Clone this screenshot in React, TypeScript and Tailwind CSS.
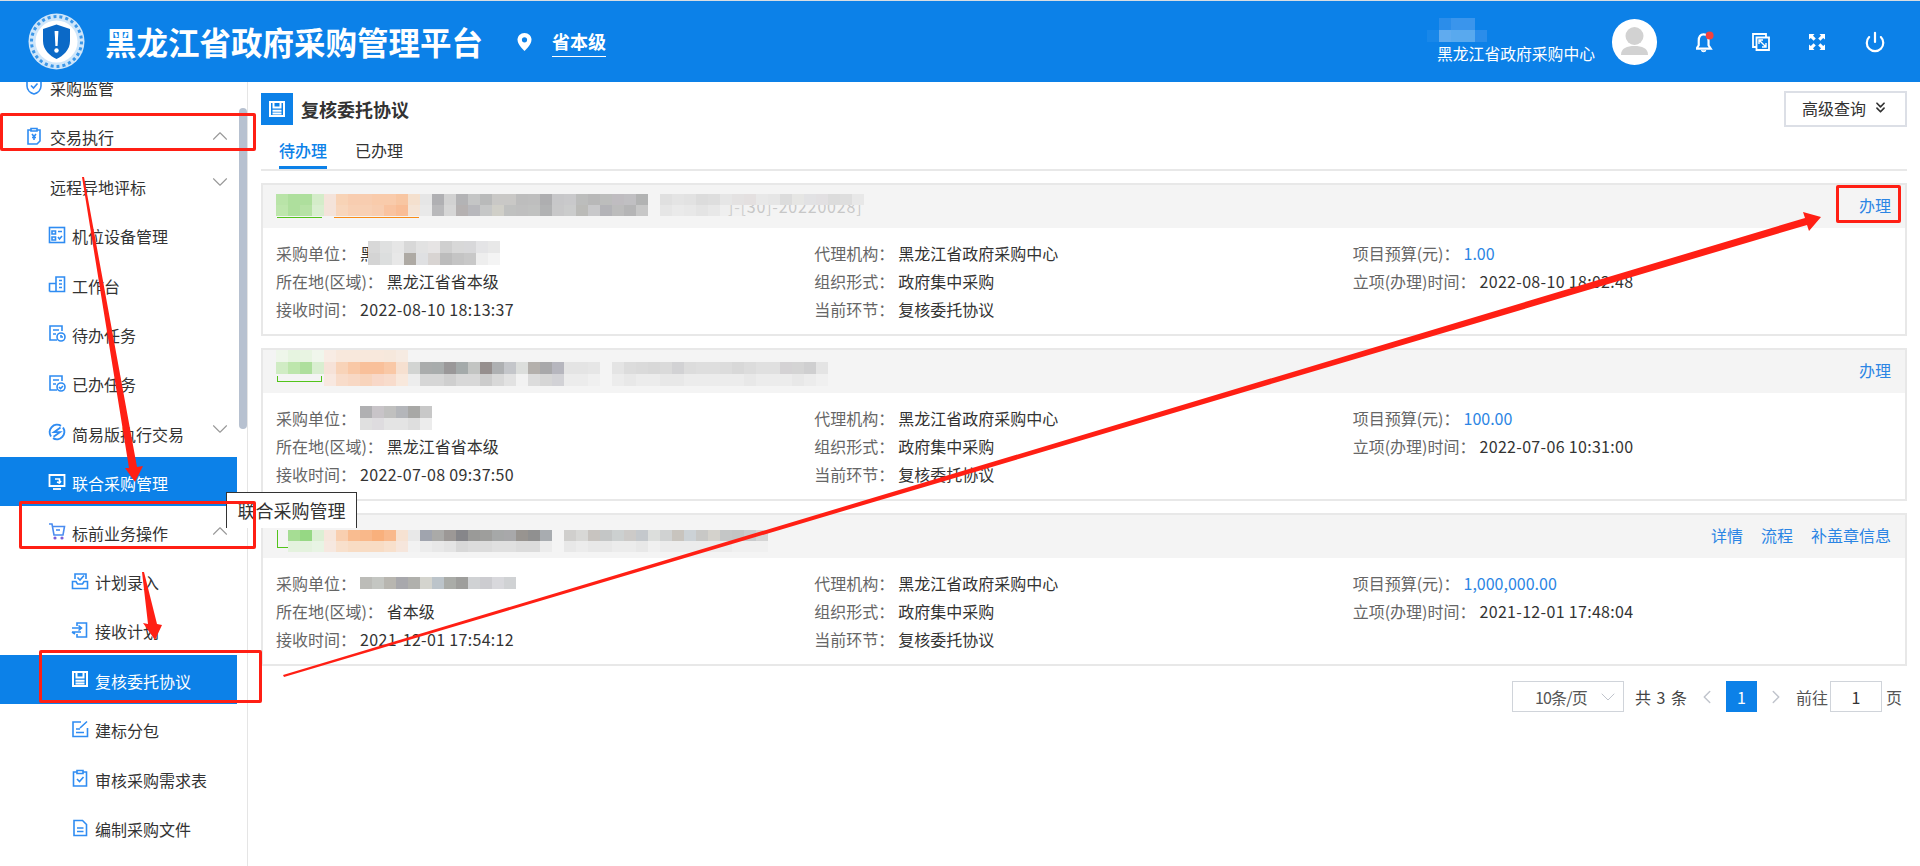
import { ReactNode } from "react"
import { ChevronDown, ChevronLeft, ChevronRight, ChevronUp, ChevronsDown, Power } from "lucide-react"

// --- mosaic blocks standing in for the blurred-out parts of the screenshot ---
function Mosaic({ rows, tall = false, className = "" }: { rows: string[]; tall?: boolean; className?: string }) {
  return (
    <div className={"relative flex flex-col " + className}>
      {rows.map((row, i) => (
        <div key={i} className="flex">
          {row.split(" ").map((c, j) => (
            <div key={j} className={tall ? "w-3 h-3" : "w-3 h-[11px]"} style={{ backgroundColor: c === "0" ? "transparent" : "#" + c }} />
          ))}
        </div>
      ))}
    </div>
  )
}

function Ico({ children, className = "" }: { children: ReactNode; className?: string }) {
  return (
    <svg viewBox="0 0 18 18" fill="none" stroke="currentColor" strokeWidth="1.6" className={"w-[18px] h-[18px] shrink-0 " + className}>
      {children}
    </svg>
  )
}

const ShieldIcon = () => (
  <Ico>
    <path d="M9 1 L16 3.5 V9 C16 13 12.5 16 9 17 C5.5 16 2 13 2 9 V3.5 Z" />
    <path d="M6 8.5 L8.5 11 L12.5 6.5" />
  </Ico>
)
const YenClipIcon = () => (
  <Ico>
    <path d="M6 3 H3 V17 H12 L15 14 V3 H12" />
    <path d="M6 1.5 H12 V4 H6 Z" />
    <path d="M7 7 L9 9.5 L11 7 M9 9.5 V13 M7 10.5 H11" />
  </Ico>
)
const DeviceIcon = () => (
  <Ico>
    <rect x="1.5" y="1.5" width="15" height="15" />
    <path d="M4 5 H7.5 V8 H4 Z M10 5.5 H14 M4 11 H7.5 V14 H4 Z M10 11 L11.5 13 L14 10" />
  </Ico>
)
const DeskIcon = () => (
  <Ico>
    <path d="M1.5 16.5 V8.5 H8 M8 16.5 V2 H16.5 V16.5 H1.5" />
    <path d="M11 5.5 H14 M11 9 H14 M11 12.5 H14" />
  </Ico>
)
const TaskClockIcon = () => (
  <Ico>
    <path d="M9 16 H2 V2 H14 V7" />
    <path d="M5 6 H11 M5 10 H8" />
    <circle cx="13" cy="13" r="4" />
    <path d="M13 11 V13 H15" />
  </Ico>
)
const TaskDoneIcon = () => (
  <Ico>
    <path d="M9 16 H2 V2 H14 V7" />
    <path d="M5 6 H11 M5 10 H8" />
    <circle cx="13" cy="13" r="4" />
    <path d="M11 13 L12.5 14.5 L15 12" />
  </Ico>
)
const NoSignIcon = () => (
  <Ico>
    <path d="M13 2.8 A7.5 7.5 0 0 0 3 13.5" strokeWidth="2" />
    <path d="M5 15.2 A7.5 7.5 0 0 0 15 4.5" strokeWidth="2" />
    <path d="M12.5 4.5 L6 9.2 H12 L5.5 13.8" strokeWidth="1.8" />
  </Ico>
)
const ScreenIcon = () => (
  <Ico>
    <path d="M1.5 2 H16.5 V13 H1.5 Z" strokeWidth="1.8" />
    <path d="M5 16 H13" strokeWidth="1.8" />
    <path d="M7 6 H11.5 V9.5 M9 9 L11.5 10 L13 8" />
  </Ico>
)
const CartIcon = () => (
  <Ico>
    <path d="M1 2 H4 L6 13 H15 L16.5 4.5 H4.5" stroke="#4a8cf0" />
    <path d="M8 8 H12" stroke="#4a8cf0" />
    <circle cx="7" cy="16" r="0.8" fill="#7a5fd8" stroke="#7a5fd8" />
    <circle cx="14" cy="16" r="0.8" fill="#7a5fd8" stroke="#7a5fd8" />
  </Ico>
)
const InboxCheckIcon = () => (
  <Ico>
    <path d="M4 7 V2 H15 V7" />
    <path d="M1.5 9.5 H5 L6.5 12 H11.5 L13 9.5 H16.5 V16.5 H1.5 Z" />
    <path d="M6.5 5.5 L9 8 L13 3.5" />
  </Ico>
)
const ReceiveIcon = () => (
  <Ico>
    <path d="M6 5 V2 H15.5 V16 H6 V13" />
    <path d="M1 7 H10 M7.5 4.5 L10.5 7 L7.5 9.5 M1 11 H10 M4 13 L1 11" />
  </Ico>
)
const FloppyIcon = () => (
  <Ico>
    <path d="M2 2 H16 V16 H2 Z" strokeWidth="2" />
    <path d="M5.5 2 V7.5 H12.5 V2 M4.5 10.8 H13.5 M4.5 13.6 H13.5" strokeWidth="2" />
  </Ico>
)
const EditIcon = () => (
  <Ico>
    <path d="M10 2 H2 V16.5 H16.5 V8" />
    <path d="M5 12.5 H13 M5 9 H9 M9 8 L16 1.5" />
  </Ico>
)
const ClipCheckIcon = () => (
  <Ico>
    <path d="M6 3 H2.5 V17 H15.5 V3 H12" />
    <path d="M6 1.5 H12 V4.5 H6 Z" />
    <path d="M6 10 L8.5 12.5 L12.5 8" />
  </Ico>
)
const FileIcon = () => (
  <Ico>
    <path d="M3 1.5 H11.5 L15.5 5.5 V16.5 H3 Z" />
    <path d="M6 9 H12.5 M6 12.5 H12.5" />
  </Ico>
)

type Item = { label: string; icon?: ReactNode; level: 1 | 2 | 3; chevron?: "up" | "down"; active?: boolean }

const menu: Item[] = [
  { label: "采购监管", icon: <ShieldIcon />, level: 1 },
  { label: "交易执行", icon: <YenClipIcon />, level: 1, chevron: "up" },
  { label: "远程异地评标", level: 1, chevron: "down" },
  { label: "机位设备管理", icon: <DeviceIcon />, level: 2 },
  { label: "工作台", icon: <DeskIcon />, level: 2 },
  { label: "待办任务", icon: <TaskClockIcon />, level: 2 },
  { label: "已办任务", icon: <TaskDoneIcon />, level: 2 },
  { label: "简易版执行交易", icon: <NoSignIcon />, level: 2, chevron: "down" },
  { label: "联合采购管理", icon: <ScreenIcon />, level: 2, active: true },
  { label: "标前业务操作", icon: <CartIcon />, level: 2, chevron: "up" },
  { label: "计划录入", icon: <InboxCheckIcon />, level: 3 },
  { label: "接收计划", icon: <ReceiveIcon />, level: 3 },
  { label: "复核委托协议", icon: <FloppyIcon />, level: 3, active: true },
  { label: "建标分包", icon: <EditIcon />, level: 3 },
  { label: "审核采购需求表", icon: <ClipCheckIcon />, level: 3 },
  { label: "编制采购文件", icon: <FileIcon />, level: 3 },
]

function MenuRow({ item }: { item: Item }) {
  const pad = item.level === 1 ? "pl-[25px]" : item.level === 2 ? "pl-[48px]" : "pl-[71px]"
  const gap = item.level === 1 ? "gap-[7px]" : "gap-[6px]"
  return (
    <div
      className={
        "h-[49.43px] w-[237px] flex items-center text-[16px] shrink-0 " +
        pad +
        " " +
        gap +
        (item.active ? " bg-[#0c81e8] text-white" : " text-[#333] ")
      }
    >
      {item.icon ? (
        <span className={item.active ? "text-white flex" : "text-[#2f8cf2] flex"}>{item.icon}</span>
      ) : (
        <span className="w-[18px]" />
      )}
      <span className="whitespace-nowrap pt-[3px]">{item.label}</span>
      {item.chevron === "up" && (
        <span className="ml-auto mr-[4px] text-[#999] flex">
          <ChevronUp size={26} strokeWidth={1} />
        </span>
      )}
      {item.chevron === "down" && (
        <span className="ml-auto mr-[4px] -mt-[6px] text-[#999] flex">
          <ChevronDown size={26} strokeWidth={1} />
        </span>
      )}
    </div>
  )
}

function Field({ label, value, blue, date, blur }: { label: string; value?: string; blue?: boolean; date?: boolean; blur?: ReactNode }) {
  return (
    <div className="flex h-7 items-center whitespace-nowrap text-[16px]">
      <span className="text-[#666] mr-1">{label}：</span>
      {blur ?? <span className={(blue ? "text-[#2b85e4]" : "text-[#333]") + (date ? " tracking-[0.32px]" : "")}>{value}</span>}
    </div>
  )
}

const green1 = "b9e4a8 aedf9d aedf9d d4ecc9"
const green2 = "bde6ac aedf9d b6e2a5 d9eed0"

const cards = [
  {
    pad: "pt-[9px]",
    actions: ["办理"],
    marks: (
      <>
        <span className="absolute left-[14px] top-[32px] w-[45px] h-px bg-[#52c41a]" />
        <span className="absolute left-[71px] top-[32px] w-[85px] h-px bg-[#fa8c16]" />
        <span className="absolute left-[465px] top-[9px] leading-6 text-[16px] text-[#666] tracking-[0.8px] whitespace-nowrap">]-[30]-20220028]</span>
      </>
    ),
    first: [
      green1 + " f4e3da f8d3b6 f8cdb0 f8cdb0 f9cbab f9cbab f8c6a2 f4e0ce e6e6e6 b0b0b3 d2d2d2 b3b3b5 c4c5c5 b9baba c9c8c6 c9c8c6 bdbdbd bebebe aeaeb0 c7c7c9 c9c9cb bcbdbc b8b8b8 bcbdbc bfbcc0 c0bfc2 b2b3b3",
      green2 + " f4e3da f8d6bc f8d0b4 f8d0b4 f8cdb0 f9c3a0 f9bd96 f4e4d6 e9e9e9 b9b9bb d6d6d6 b5b1b1 b8b8bc c6c7c7 d0cfc8 c0c1c0 bfbfbf c0c1c0 b1b2b3 c8c8c9 cbcccc bbbbb8 c8c8ca b3b3b7 bcbcbc b5b5b6 c7c7c7",
    ],
    second: [
      "e0e0e0 e4e4e4 e2e2e2 dcdcdc dedede e6e6e6 e4e2e2 e4e0e0 e8e8e8 e6e6e6 dcdcdc e6e6e4 e2e2e4 e2e0e2 dcdcdc dedede e8e8e8",
      "e6e6e6 eaeaea e8e8e8 e4e4e4 e8e8e8 ecececc0 efefefc0 f2f2f2b0 f2f2f2b0 f4f4f4b0 f4f4f4b0 f4f4f4b0 f4f4f4b0 f4f4f4b0 f4f4f4b0 f4f4f4b0 f4f4f4b0",
    ],
    tall: false,
    unit: (
      <div className="flex items-center">
        <span className="text-[#333]">黑</span>
        <Mosaic
          tall
          className="-ml-[8px]"
          rows={[
            "d8d8d8 dfe0e0 e6e6e6 d8d8d8 e2e2e2 e6e4e4 cfcfcf d8d8d8 d8d8da e4e4e6 e8e8e8",
            "d4d4d4 dcdede e8e8e8 aeaaa4 dfe0e2 d8d4d2 bcbcbc c4c4c4 c8c8c8 eeeeee f4f4f4",
          ]}
        />
      </div>
    ),
    region: "黑龙江省省本级",
    received: "2022-08-10 18:13:37",
    budget: "1.00",
    created: "2022-08-10 18:02:48",
  },
  {
    pad: "pt-[0px]",
    actions: ["办理"],
    marks: <span className="absolute left-[14px] top-[26px] w-[45px] h-[6px] border-x border-b border-[#52c41a]" />,
    first: [
      "eef6ea e6f4e0 e8f4e2 f0f6ec f8ece4 f8e8dc f8e8dc f8e8dc f8e8dc f6e8dc f6ebe2 0 0 0 0 0 0 0 0 0 0 0 0 0 0 0 0",
      "d0ecc4 bde6ac aedf9d d9eed0 f6e2d8 f8d3b8 f9c8a6 f9c09a f9c09a f9c8a6 f6e0d0 d2d4d2 aaacac a8acac 9a9899 a4aaaa c2c4c2 968f8e aeb0b2 c4c6ca dcdedc b4b0ac a8a8aa b6b6be e4e4e4 e4e4e4 e6e6e6",
      "0 0 0 0 f8e8e0 f8dcca f8d8c4 f8d4bc f8d8c8 f8dccc f8e8dc ededed d6d6d6 d6d6d6 cfcfcf d8d8d8 d8d8d8 cccccc d8d8d8 e2e2e2 f2f2f2 dcdcdc d6d6d6 d2d2d6 ececec ececec f0f0f0",
    ],
    second: [
      "f4f4f4 f4f4f4 f4f4f4 f4f4f4 f4f4f4 f4f4f4 f4f4f4 f4f4f4 f4f4f4 f4f4f4 f4f4f4 f4f4f4 f4f4f4 f4f4f4 f4f4f4 f4f4f4 f4f4f4 f4f4f4",
      "e4e4e4 dcdcdc dadada d8d8d8 dadada d2d2d4 dcdcdc dedede dedede dcdcdc d8d8d8 dcdcdc e0e0e0 e0e0e0 d4d2d4 d4d4d4 cfcfd0 e4e4e4",
      "ececec e8e8e8 ececec ececec e8e8e8 e8e8e8 ececec ececec ececec ececec ececec e8e8e8 ececec ececec ececec e8e8e8 ececec f0f0f0",
    ],
    tall: true,
    unit: (
      <Mosaic
        tall
        rows={["b0b0b2 c8c4c8 c0c0bf b4b6ba a8a8a6 c8c8c8", "e0e0e0 dedcdf e4e4e4 e4e4e4 dedede ececec"]}
      />
    ),
    region: "黑龙江省省本级",
    received: "2022-07-08 09:37:50",
    budget: "100.00",
    created: "2022-07-06 10:31:00",
  },
  {
    pad: "pt-[15px]",
    actions: ["详情", "流程", "补盖章信息"],
    marks: <span className="absolute left-[14px] top-[15px] w-[12px] h-[18px] border-l border-b border-[#52c41a]" />,
    first: [
      "0 a6dd94 96d884 dcefd4 f6e6dc f9cfb0 f9bc90 f9b88a f9b07c f9b98c f6e2d2 e8e8e8 a0a4ae aaaaa8 9c9896 86868a 9a9a98 9e9e9c a6a8a8 a8a8aa 989490 909090 a8acb0",
      "0 e4f2de e4f2de e8f4e4 f6e8e0 f8e0cc f8dcc4 f8dcc4 f8dcc4 f8e0cc f6e6dc f2f2f2 ececec e8e8e8 e4e4e4 d8d8d8 dcdcdc dcdcdc e0e0e0 e0e0e0 dcdcdc dcdcdc ececec",
    ],
    second: [
      "d0cfcd d8d8d6 c8c4c0 c4c6c6 ccd0d0 cccac8 c4c8cc dcdedc d0d2d2 c8c4be ccd2d6 c8c8c6 d4d2cc c4c6c6 c2c4c4 c8cacc d4d4d4",
      "e8e8e8 ececec e8e8e8 e8e8e8 ececec ececec e8e8e8 f0f0f0 ececec ececec ececec ececec ececec ececec f0f0f0 f0f0f0 f0f0f0",
    ],
    tall: false,
    unit: (
      <Mosaic
        tall
        rows={["bcbcb8 c4c6c2 b8b6b0 a8a8ac b0b0ac d4d4ce bcc4ca aaaca8 9e9e9c d0d2d4 ccccd0 d8d8dc d0d2d4"]}
      />
    ),
    region: "省本级",
    received: "2021-12-01 17:54:12",
    budget: "1,000,000.00",
    created: "2021-12-01 17:48:04",
  },
]

function Card({ card }: { card: (typeof cards)[number] }) {
  return (
    <div className="h-[153px] border-2 border-[#e8e8e8] bg-white overflow-hidden">
      <div className={"relative h-[43px] bg-[#f4f4f4] pl-[13px] flex items-start " + card.pad}>
        {card.marks}
        <Mosaic rows={card.first} tall={card.tall} />
        <Mosaic rows={card.second} tall={card.tall} className="ml-3" />
        <div className="absolute right-[14px] top-0 h-full pb-[3px] flex items-center gap-[18px] text-[16px] text-[#2b85e4]">
          {card.actions.map((a) => (
            <span key={a}>{a}</span>
          ))}
        </div>
      </div>
      <div className="grid grid-cols-3 pl-[13px] pr-[14px] pt-[11px]">
        <div>
          <Field label="采购单位" blur={card.unit} />
          <Field label="所在地(区域)" value={card.region} />
          <Field label="接收时间" value={card.received} date />
        </div>
        <div>
          <Field label="代理机构" value="黑龙江省政府采购中心" />
          <Field label="组织形式" value="政府集中采购" />
          <Field label="当前环节" value="复核委托协议" />
        </div>
        <div>
          <Field label="项目预算(元)" value={card.budget} blue />
          <Field label="立项(办理)时间" value={card.created} date />
        </div>
      </div>
    </div>
  )
}

function Logo() {
  return (
    <svg viewBox="0 0 57 57" className="w-[57px] h-[57px] shrink-0">
      <circle cx="28.5" cy="28.5" r="28" fill="#cfe6fa" />
      <circle cx="28.5" cy="28.5" r="25" fill="none" stroke="#3b97e8" strokeWidth="3" strokeDasharray="3 3" />
      <circle cx="28.5" cy="28.5" r="21" fill="#fff" />
      <path d="M28.5 11.5 L42 16 V28 C42 37 35 43 28.5 46 C22 43 15 37 15 28 V16 Z" fill="#0b69c7" />
      <path d="M26.6 18 H30.4 L29.6 33 H27.4 Z" fill="#fff" />
      <circle cx="28.5" cy="37.5" r="2.2" fill="#fff" />
    </svg>
  )
}

export default function App() {
  return (
    <div className="relative w-[1920px] h-[866px] overflow-hidden bg-white font-['Noto_Sans_CJK_SC','Noto_Sans',sans-serif]">
      {/* Header */}
      <header className="relative z-10 h-[82px] bg-[#0c81e8] border-t border-[#d8dde2] flex items-center text-white">
        <div className="ml-[28px]">
          <Logo />
        </div>
        <h1 className="ml-[20px] text-[31.5px] font-bold whitespace-nowrap">黑龙江省政府采购管理平台</h1>
        <svg viewBox="0 0 15 18" className="ml-[34px] w-[15px] h-[18px]">
          <path d="M7.5 0 C3.4 0 0.5 3 0.5 6.8 C0.5 11 5 15.5 7.5 18 C10 15.5 14.5 11 14.5 6.8 C14.5 3 11.6 0 7.5 0 Z" fill="#fff" />
          <circle cx="7.5" cy="6.8" r="2.6" fill="#0c81e8" />
        </svg>
        <span className="ml-[20px] text-[18px] font-bold border-b border-white leading-[30px] whitespace-nowrap">省本级</span>

        <div className="ml-auto flex flex-col items-start">
          <Mosaic
            tall
            className="ml-[-10px] opacity-90"
            rows={["0 2f8feb 3f98ed 3f98ed 0", "1a88ea 6ab0f0 62aeef 62aeef 2f8feb"]}
          />
          <span className="text-[15.8px] whitespace-nowrap leading-[22px] mt-[1px]">黑龙江省政府采购中心</span>
        </div>
        <div className="ml-[17px] w-[45px] h-[46px] rounded-full bg-white overflow-hidden">
          <svg viewBox="0 0 45 46" className="w-full h-full">
            <circle cx="22.5" cy="17" r="9" fill="#d2d2d2" />
            <path d="M9 36 C9 29 15 27 22.5 27 C30 27 36 29 36 36 Z" fill="#d2d2d2" />
          </svg>
        </div>
        <div className="ml-[39px] mr-[34px] flex items-center gap-[38px]">
          <svg viewBox="1 0 16.5 20" className="w-[18px] h-[22px]">
            <path d="M8 3 C4.5 3 3.5 6 3.5 9 V13 L1.5 16 H14.5 L12.5 13 V9 C12.5 6 11.5 3 8 3 Z" fill="none" stroke="#fff" strokeWidth="2" />
            <path d="M6 17.5 C6.5 19.5 9.5 19.5 10 17.5" fill="#fff" stroke="#fff" />
            <circle cx="13.5" cy="4" r="3.6" fill="#f5413c" />
          </svg>
          <svg viewBox="0 0 18 18" className="w-[18px] h-[18px]" fill="none" stroke="#fff" strokeWidth="1.8">
            <path d="M14 5 V1 H1 V14 H5" />
            <path d="M4.5 4.5 H17 V17 H4.5 Z" />
            <path d="M7 7 L14 14 M7 11 V7 H11 M14 10 V14 H10" strokeWidth="1.4" />
          </svg>
          <svg viewBox="0 0 18 18" className="w-[18px] h-[18px]" fill="#fff">
            <path d="M1 1 H6.5 L5 2.8 L7.8 5.6 L5.6 7.8 L2.8 5 L1 6.5 Z" />
            <path d="M17 1 H11.5 L13 2.8 L10.2 5.6 L12.4 7.8 L15.2 5 L17 6.5 Z" />
            <path d="M1 17 H6.5 L5 15.2 L7.8 12.4 L5.6 10.2 L2.8 13 L1 11.5 Z" />
            <path d="M17 17 H11.5 L13 15.2 L10.2 12.4 L12.4 10.2 L15.2 13 L17 11.5 Z" />
          </svg>
          <Power size={22} strokeWidth={2.4} />
        </div>
      </header>

      <div className="flex h-[784px]">
        {/* Sidebar */}
        <aside className="relative w-[248px] shrink-0 border-r border-[#e5e5e5] overflow-hidden">
          <div className="-mt-[20.4px] flex flex-col">
            {menu.map((item) => (
              <MenuRow key={item.label} item={item} />
            ))}
          </div>
          <div className="absolute left-[239px] top-[26px] w-2 h-[321px] rounded bg-[#b7c1d0]" />
        </aside>

        {/* Main */}
        <main className="flex-1 min-w-0 px-[13px] pt-[9px]">
          <div className="flex items-center justify-between h-9">
            <div className="flex items-center">
              <div className="w-8 h-8 bg-[#0c81e8] text-white flex items-center justify-center">
                <FloppyIcon />
              </div>
              <h2 className="ml-[8px] text-[18px] font-bold text-[#333]">复核委托协议</h2>
            </div>
            <button className="w-[123px] h-9 border-2 border-[#dcdfe6] bg-white pb-[3px] text-[16px] text-[#333] flex items-center justify-center gap-[6px]">
              高级查询
              <ChevronsDown size={17} strokeWidth={2.4} />
            </button>
          </div>

          <div className="mt-[7px] h-[37px] border-b-2 border-[#e8e8e8] flex items-end pl-[18px] gap-[28px] text-[16px]">
            <span className="h-[36px] flex items-center border-b-[3px] border-[#0c81e8] text-[#0c81e8] font-medium">待办理</span>
            <span className="h-[36px] flex items-center border-b-[3px] border-transparent text-[#333]">已办理</span>
          </div>

          <div className="mt-3 flex flex-col gap-3">
            {cards.map((c, i) => (
              <Card key={i} card={c} />
            ))}
          </div>

          {/* Pagination */}
          <div className="mt-[15px] pr-[5px] flex items-center justify-end text-[16px] text-[#555]">
            <div className="relative w-[112px] h-[31px] border border-[#d0d4da] flex items-center pl-[22px] tracking-[-0.8px] text-[#555]">
              10条/页
              <ChevronDown size={24} strokeWidth={1} className="absolute right-[3px] top-[3px] text-[#c0c4cc]" />
            </div>
            <span className="ml-[11px] whitespace-nowrap text-[#444] [word-spacing:2px]">共 3 条</span>
            <ChevronLeft size={22} strokeWidth={1.6} className="ml-[9px] text-[#c0c4cc]" />
            <span className="ml-[8px] w-[31px] h-[31px] bg-[#0c81e8] text-white flex items-center justify-center">1</span>
            <ChevronRight size={22} strokeWidth={1.6} className="ml-[8px] text-[#c0c4cc]" />
            <span className="ml-[9px] whitespace-nowrap">前往</span>
            <span className="ml-[2px] w-[52px] h-[31px] border border-[#d0d4da] flex items-center justify-center text-[#333]">1</span>
            <span className="ml-[4px]">页</span>
          </div>
        </main>
      </div>

      {/* Tooltip over the sidebar edge */}
      <div className="absolute z-20 left-[226px] top-[492px] w-[131px] h-[36px] bg-white border-x border-t border-[#333] text-[18px] text-[#333] flex items-center justify-center whitespace-nowrap">
        联合采购管理
      </div>

      {/* Red annotations drawn on the screenshot */}
      <div className="absolute z-30 left-0 top-[113px] w-[256px] h-[38px] border-[3px] border-[#ff1f14] rounded-[2px]" />
      <div className="absolute z-30 left-[19px] top-[501px] w-[237px] h-[48px] border-[3px] border-[#ff1f14] rounded-[2px]" />
      <div className="absolute z-30 left-[39px] top-[650px] w-[223px] h-[53px] border-[3px] border-[#ff1f14] rounded-[2px]" />
      <div className="absolute z-30 left-[1836px] top-[185px] w-[65px] h-[38px] border-[3px] border-[#ff1f14] rounded-[2px]" />
      <svg className="absolute z-30 left-0 top-0 w-[1920px] h-[866px] pointer-events-none" viewBox="0 0 1920 866" fill="#ff1f14">
        <polygon points="82,177 84,177 137,467 143,466 135,482 125,468 129,468" />
        <polygon points="142,572 144,572 157,624 162,625 155,640 143,623 148,624" />
        <polygon points="283,675 1805,218 1803,212 1821,217 1809,231 1807,225 284,677" />
      </svg>
    </div>
  )
}
